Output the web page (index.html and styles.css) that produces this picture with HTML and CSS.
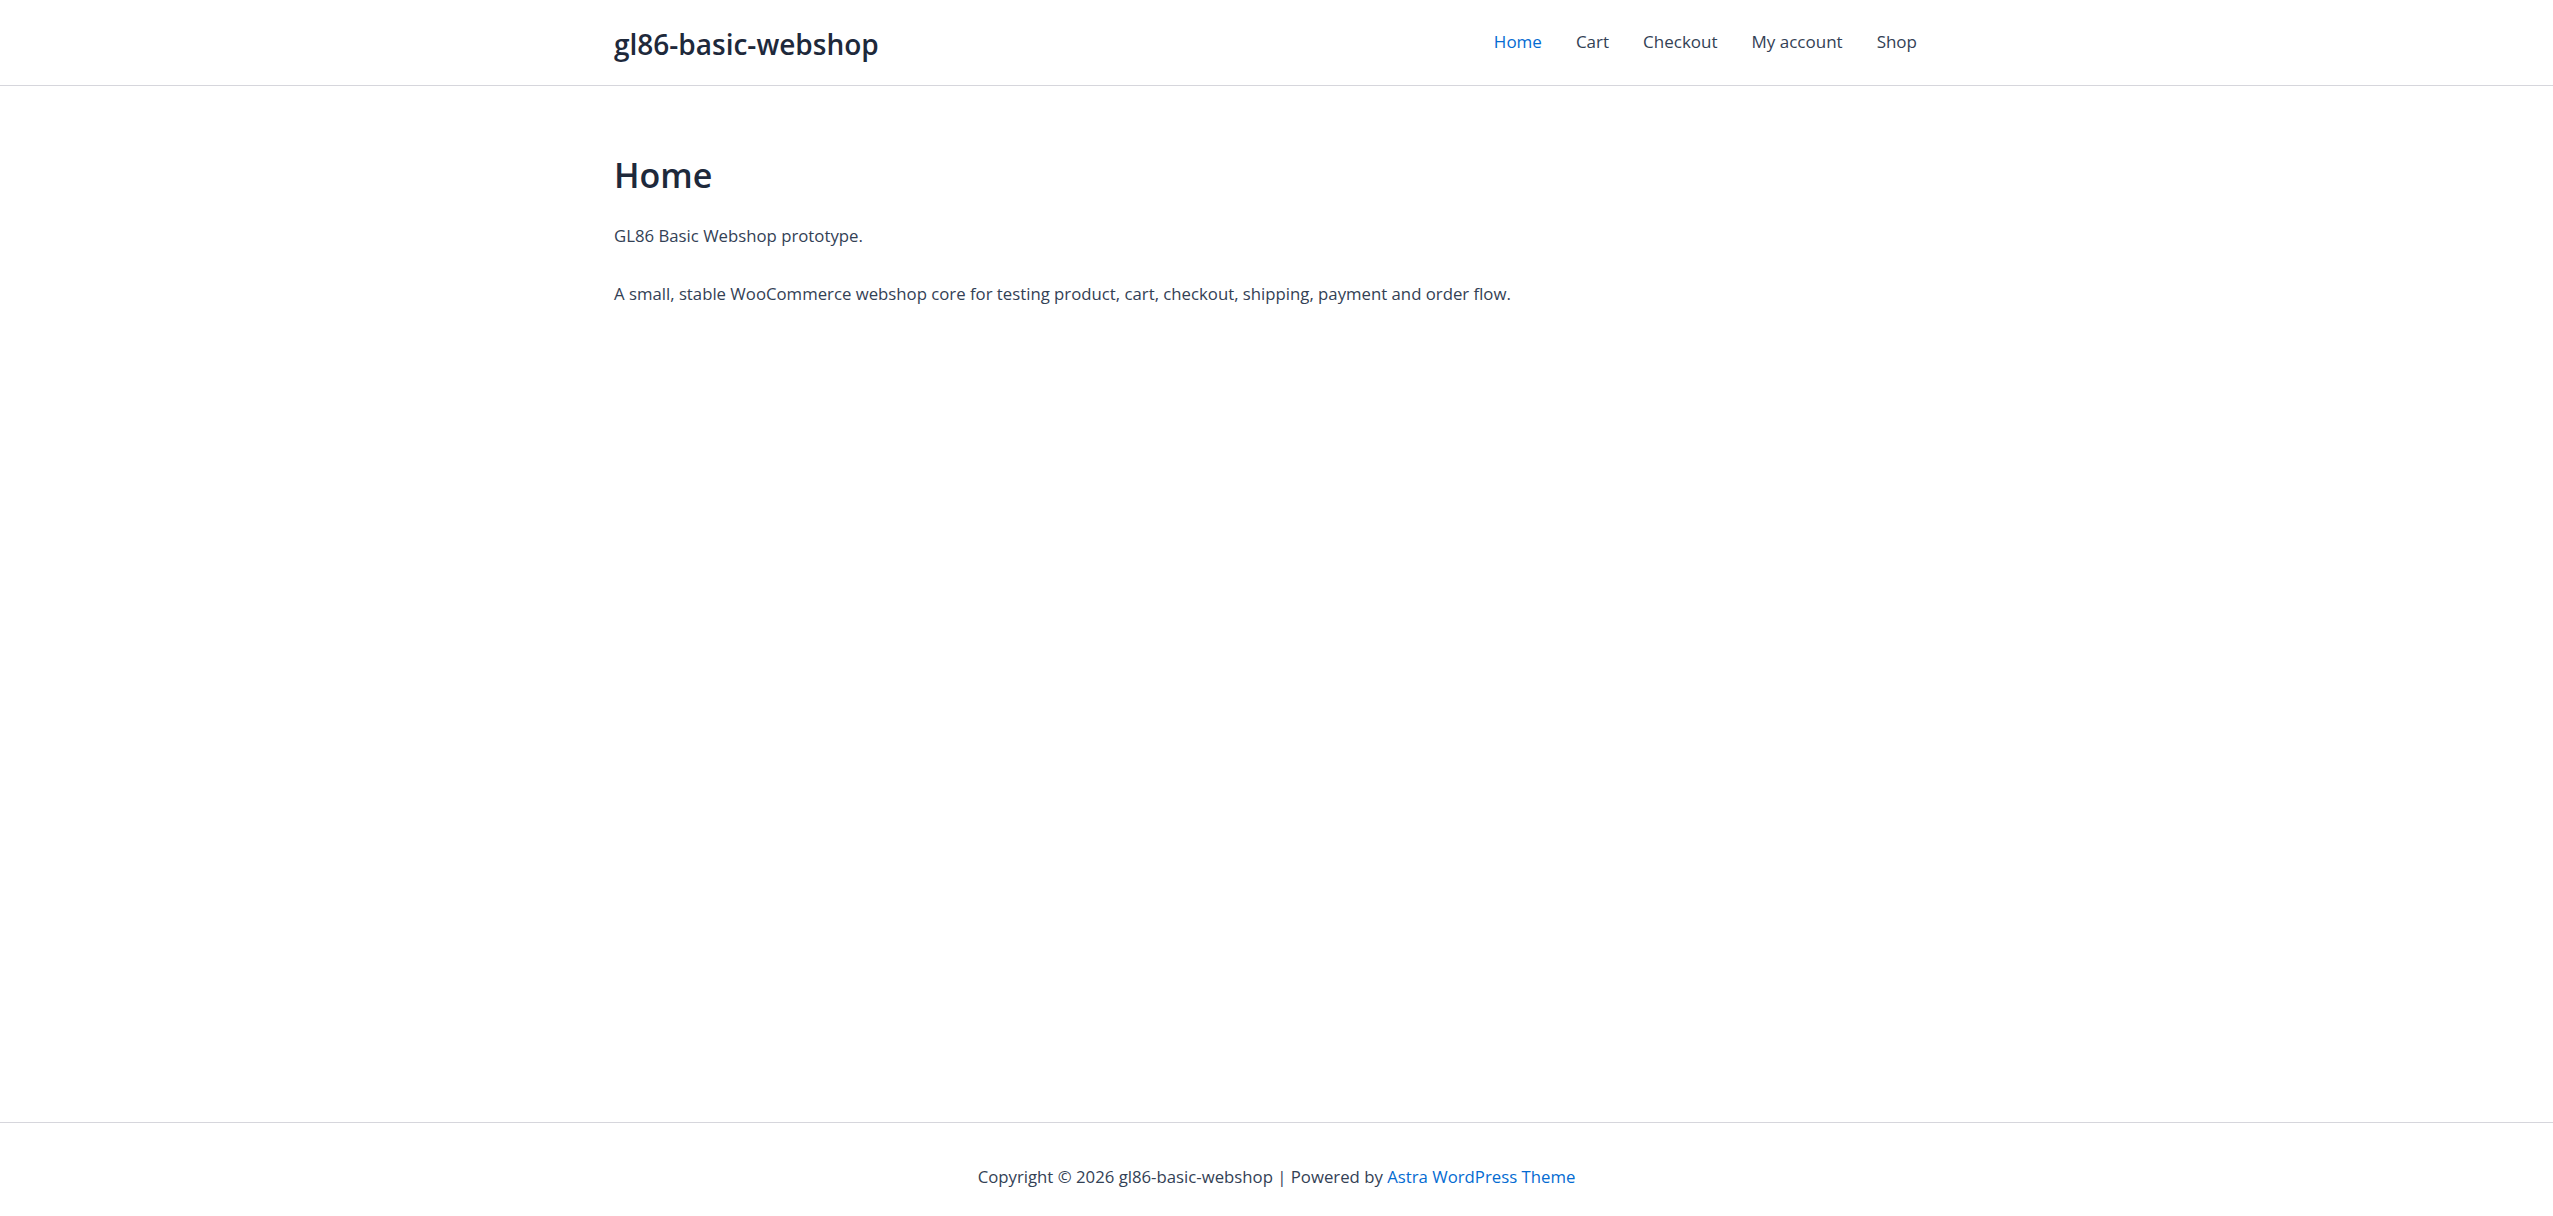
FILE: index.html
```html
<!DOCTYPE html>
<html lang="en">
<head>
    <meta charset="UTF-8">
    <meta name="viewport" content="width=device-width, initial-scale=1.0">
    <title>Home – gl86-basic-webshop</title>
    <link rel="stylesheet" href="styles.css">
</head>
<body>
    <header class="site-header">
        <div class="container header-inner">
            <a class="site-title" href="#">gl86-basic-webshop</a>
            <nav class="main-nav">
                <a class="current" href="#">Home</a>
                <a href="#">Cart</a>
                <a href="#">Checkout</a>
                <a href="#">My account</a>
                <a href="#">Shop</a>
            </nav>
        </div>
    </header>

    <main class="site-content">
        <div class="container">
            <h1 class="entry-title">Home</h1>
            <p>GL86 Basic Webshop prototype.</p>
            <p>A small, stable WooCommerce webshop core for testing product, cart, checkout, shipping, payment and order flow.</p>
        </div>
    </main>

    <footer class="site-footer">
        <div class="container footer-inner">
            Copyright &copy; 2026 gl86-basic-webshop | Powered by <a href="#">Astra WordPress Theme</a>
        </div>
    </footer>
</body>
</html>
```

FILE: styles.css
```css
* {
    margin: 0;
    padding: 0;
    box-sizing: border-box;
}

body {
    min-height: 100vh;
    display: flex;
    flex-direction: column;
    font-family: "Open Sans", "Noto Sans", sans-serif;
    font-size: 16.75px;
    line-height: 1.65;
    color: #334155;
    background: #ffffff;
}

a {
    text-decoration: none;
    color: #046bd2;
}

.container {
    width: 1325px;
    margin: 0 auto;
}

/* Header */
.site-header {
    border-bottom: 1px solid #d6d6dc;
}

.header-inner {
    height: 85px;
    display: flex;
    justify-content: space-between;
    align-items: center;
}

.site-title {
    font-size: 28px;
    font-weight: 600;
    color: #1e293b;
    padding-top: 4px;
}

.main-nav {
    display: flex;
    align-items: center;
}

.main-nav a {
    padding: 0 17px;
    color: #334155;
    font-size: 17px;
}

.main-nav a:last-child {
    padding-right: 22px;
}

.main-nav a.current {
    color: #046bd2;
}

/* Content */
.site-content {
    flex: 1;
    padding-top: 67px;
}

.entry-title {
    font-size: 34px;
    font-weight: 600;
    line-height: 1.3;
    color: #1e293b;
    margin-bottom: 25px;
}

.site-content p {
    margin-bottom: 30px;
}

/* Footer */
.site-footer {
    border-top: 1px solid #d6d6dc;
}

.footer-inner {
    padding: 40px 0 25px;
    text-align: center;
}
```
